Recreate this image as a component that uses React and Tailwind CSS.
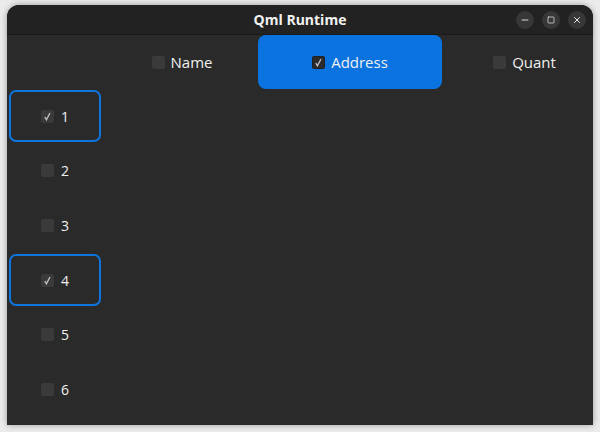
import { Minus, Square, X } from 'lucide-react'

const rows = [
  { n: 1, checked: true },
  { n: 2, checked: false },
  { n: 3, checked: false },
  { n: 4, checked: true },
  { n: 5, checked: false },
  { n: 6, checked: false },
]

function Box({ checked, dark }) {
  return (
    <span
      className={
        'flex h-[13px] w-[13px] items-center justify-center rounded-[2px] ' +
        (dark ? 'bg-[#2b2b2b] border border-[#1f1f1f]' : 'bg-[#3a3a3a]')
      }
    >
      {checked && (
        <svg width="9" height="9" viewBox="0 0 9 9">
          <path d="M1.8 5 L3.4 7.8 L7 1" fill="none" stroke="#c4c4c4" strokeWidth="1.3" />
        </svg>
      )}
    </span>
  )
}

function HeaderCell({ label, checked, active, width }) {
  return (
    <div
      className={
        'flex h-full items-center justify-center gap-[6px] ' +
        width +
        (active ? ' rounded-[8px] bg-[#0a73e0]' : '')
      }
    >
      <Box checked={checked} dark={active} />
      <span className="text-[15px] text-[#f0f0f0]">{label}</span>
    </div>
  )
}

export default function App() {
  return (
    <div
      className="h-[432px] w-[600px] bg-[#ebebeb] pl-[7px] pt-[5px]"
      style={{ fontFamily: '"Open Sans", "Noto Sans", sans-serif' }}
    >
      <div className="flex h-[420px] w-[586px] flex-col overflow-hidden rounded-t-[12px] bg-[#2a2a2a] shadow-[0_0_6px_rgba(0,0,0,0.35)]">
        <div className="relative flex h-[30px] shrink-0 items-center justify-center border-b border-[#1a1a1a] bg-[#222222]">
          <span className="text-[14px] font-bold text-[#f2f2f2]">Qml Runtime</span>
          <div className="absolute right-[7px] top-[6px] flex gap-[8px]">
            <span className="flex h-[18px] w-[18px] items-center justify-center rounded-full bg-[#373737] text-[#e8e8e8]">
              <Minus size={10} strokeWidth={2.2} />
            </span>
            <span className="flex h-[18px] w-[18px] items-center justify-center rounded-full bg-[#373737] text-[#e8e8e8]">
              <Square size={8} strokeWidth={2.2} />
            </span>
            <span className="flex h-[18px] w-[18px] items-center justify-center rounded-full bg-[#373737] text-[#e8e8e8]">
              <X size={10} strokeWidth={2.4} />
            </span>
          </div>
        </div>

        <div className="flex h-[54px] shrink-0">
          <div className="w-[95px]" />
          <HeaderCell label="Name" checked={false} width="w-[156px] pl-[4px]" />
          <HeaderCell label="Address" checked active width="w-[184px]" />
          <HeaderCell label="Quant" checked={false} width="w-[151px] pl-[14px]" />
        </div>

        <div className="flex flex-col">
          {rows.map(r => (
            <div key={r.n} className="flex h-[54.6px] items-center pl-[2px]">
              <div
                className={
                  'flex h-[52px] w-[92px] items-center justify-center gap-[7px] rounded-[7px] border-2 ' +
                  (r.checked ? 'border-[#0f74dd]' : 'border-transparent')
                }
              >
                <Box checked={r.checked} />
                <span className="text-[14px] text-[#f0f0f0]">{r.n}</span>
              </div>
            </div>
          ))}
        </div>
      </div>
    </div>
  )
}
